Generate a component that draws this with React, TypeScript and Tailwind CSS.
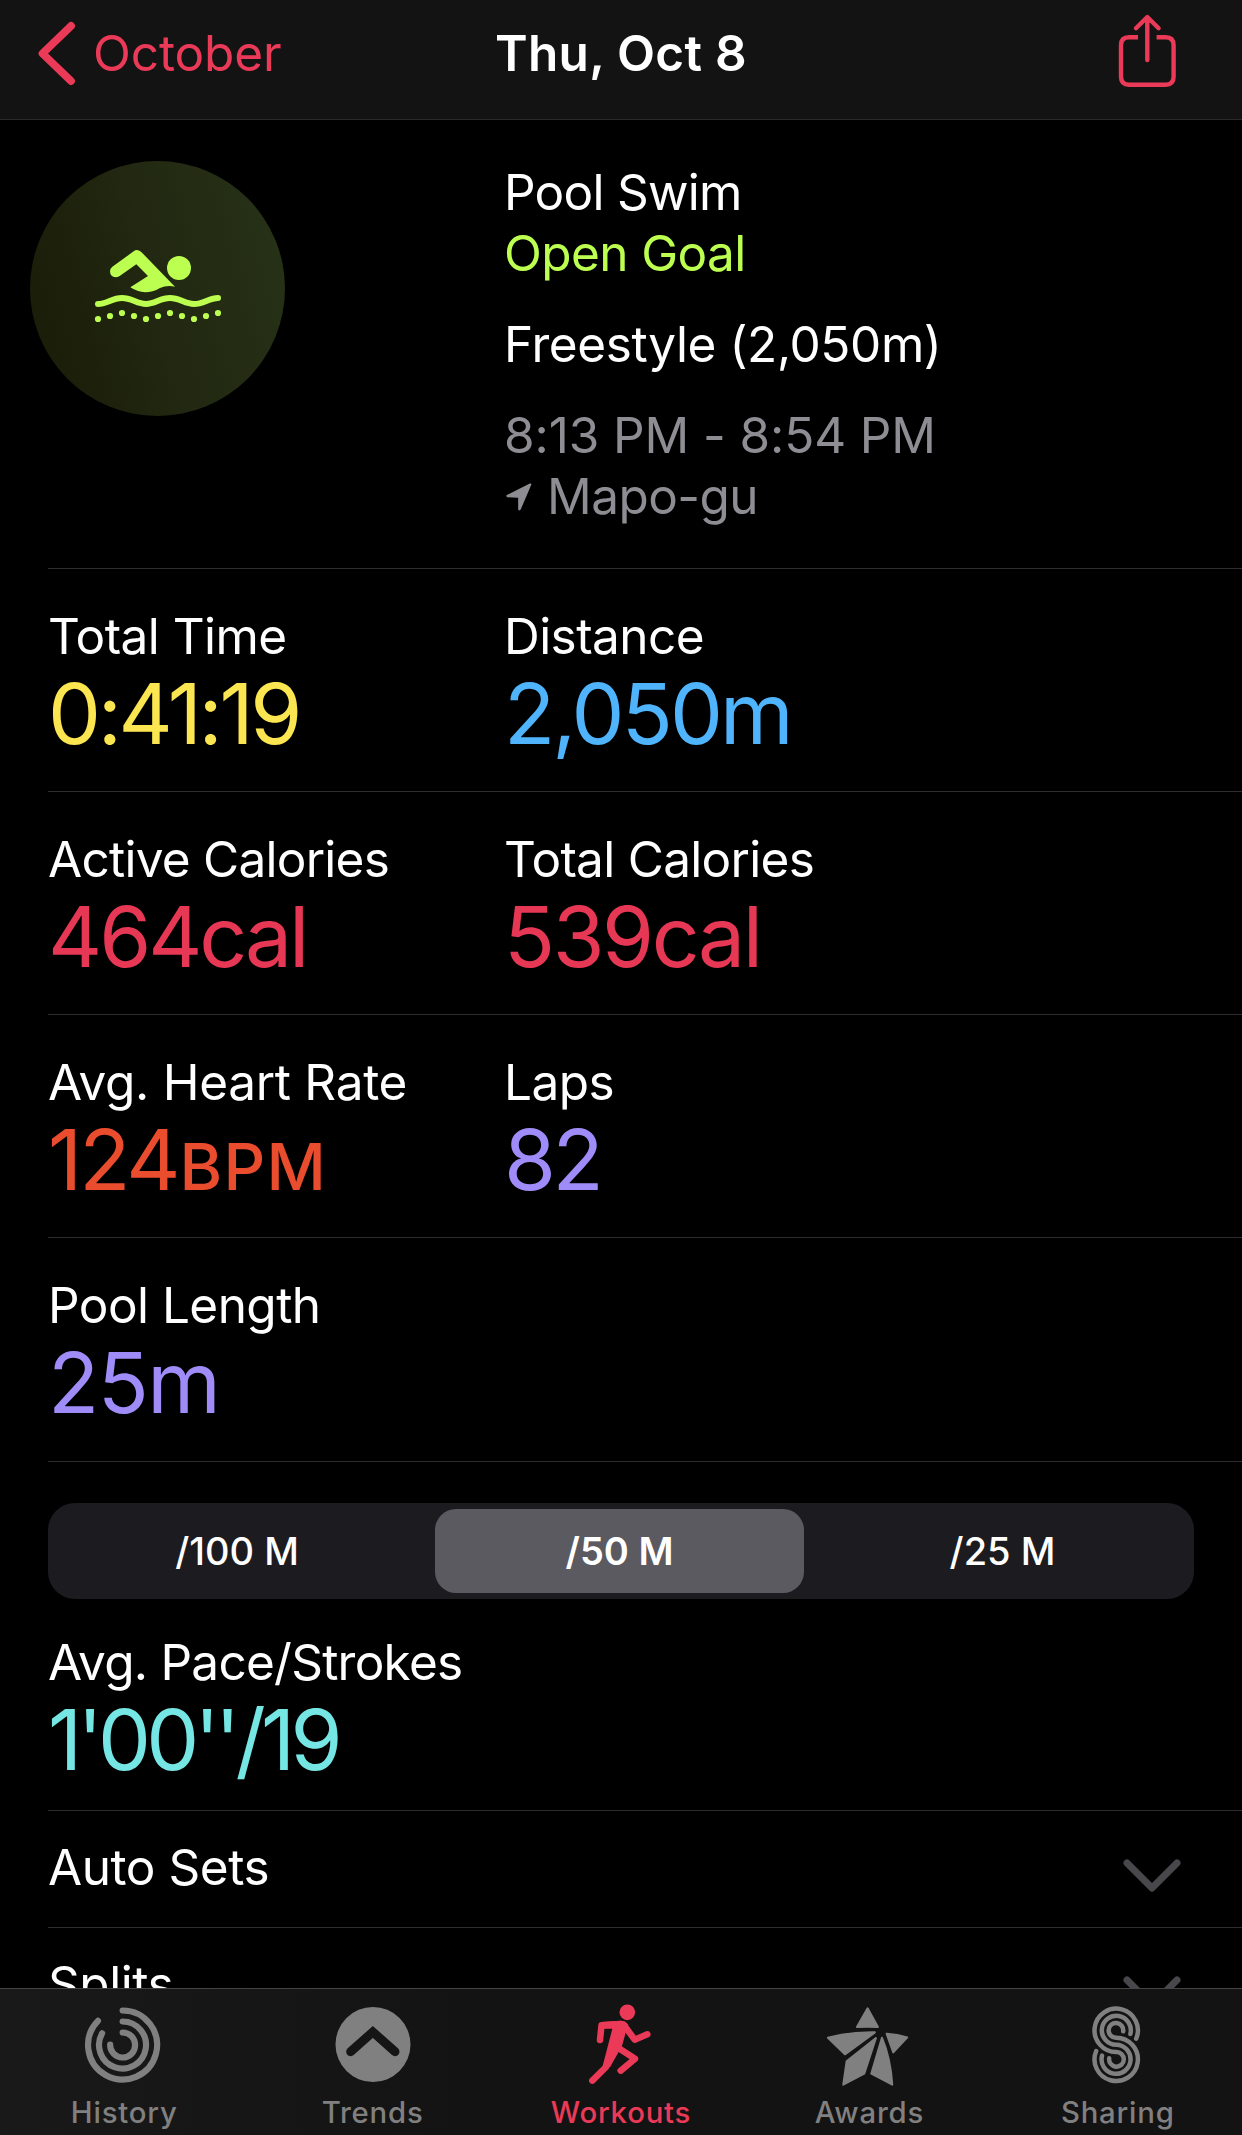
import React from "react";

type Stat = {
  label: string;
  labelClass?: string;
  value: string;
  valueClass: string;
  unit?: string;
};

const statRows: Stat[][] = [
  [
    { label: "Total Time", value: "0:41:19", valueClass: "text-[#fbe550] tracking-[-0.04em]" },
    { label: "Distance", value: "2,050m", valueClass: "text-[#4fb4fb] tracking-[-0.034em]" },
  ],
  [
    {
      label: "Active Calories",
      labelClass: "tracking-[-0.015em]",
      value: "464cal",
      valueClass: "text-[#e63755] tracking-[-0.037em]",
    },
    {
      label: "Total Calories",
      labelClass: "tracking-[-0.014em]",
      value: "539cal",
      valueClass: "text-[#e63755] tracking-[-0.029em]",
    },
  ],
  [
    {
      label: "Avg. Heart Rate",
      labelClass: "tracking-[-0.006em]",
      value: "124",
      valueClass: "text-[#ea4c2e] tracking-[-0.035em]",
      unit: "BPM",
    },
    { label: "Laps", value: "82", valueClass: "text-[#9f8cf8] tracking-[-0.04em]" },
  ],
  [{ label: "Pool Length", value: "25m", valueClass: "text-[#9f8cf8] tracking-[-0.018em]" }],
];

const waveDots = [507, 498, 489, 498, 507, 498, 489, 498, 507, 498, 489];

const BackIcon = () => (
  <svg className="h-[66px] w-[40px]" viewBox="37 21 40 66" fill="none" stroke="currentColor">
    <path d="M71 26 42.5 53.5 71 81" strokeWidth="7.8" strokeLinecap="round" strokeLinejoin="round" />
  </svg>
);

const ShareIcon = () => (
  <svg className="-mt-[5px] h-[76px] w-[60px]" viewBox="1117 13 60 76" fill="none" stroke="currentColor" strokeWidth="4.4">
    <path d="M1138 37.2h-9q-8 0-8 8v31.6q0 8 8 8h36.6q8 0 8-8V45.2q0-8-8-8h-9" />
    <path d="M1147.3 60V17.5M1136 28.2 1147.3 17 1158.6 28.2" strokeLinecap="round" strokeLinejoin="round" />
  </svg>
);

const SwimIcon = () => (
  <svg className="size-full" viewBox="30 33 765 765" fill="currentColor">
    <circle cx="477" cy="354" r="36" />
    <path d="M277 350 341 304Q351 296 363 305L465 410Q440 405 420 414 398 427 375 427 352 426 331 412L384 378 349 343 299 378Q292 382 287 382 270 380 270 363 270 355 277 350Z" />
    <path
      d="M234 462C260 462 276 444 306 444S350 462 378 462 420 444 450 444 494 462 522 462 568 444 594 444"
      fill="none"
      stroke="currentColor"
      strokeWidth="18"
      strokeLinecap="round"
    />
    {waveDots.map((y, i) => (
      <circle key={i} cx={234 + i * 36} cy={y} r="9.3" />
    ))}
  </svg>
);

const LocationIcon = () => (
  <svg className="h-[28px] w-[26px]" viewBox="48 1004 77 84" fill="currentColor">
    <path d="M50 1040 119 1005.5Q125 1004 123 1010L92 1083Q90 1087 86 1086 84 1085 84 1081V1048L52 1047Q46 1044 50 1040Z" />
  </svg>
);

const ChevronIcon = () => (
  <svg className="h-[36px] w-[60px]" viewBox="0 0 60 36" fill="none" stroke="currentColor">
    <path d="M5 5 30 30 55 5" strokeWidth="7" strokeLinecap="round" strokeLinejoin="round" />
  </svg>
);

const HistoryIcon = () => (
  <svg className="h-[90px] w-[100px]" viewBox="102.6 60 300 270" fill="none" stroke="currentColor" strokeWidth="18.5" strokeLinecap="round">
    <path d="M248.5 91.5A103.5 103.5 0 1 1 174.5 122.5" />
    <path d="M248.5 124.5A70.5 70.5 0 1 1 187 160" />
    <path d="M248.5 157.5A37.5 37.5 0 1 1 211 194" />
  </svg>
);

const TrendsIcon = () => (
  <svg className="h-[90px] w-[100px]" viewBox="848 60 300 270">
    <circle cx="998" cy="193.5" r="112.5" fill="currentColor" />
    <path d="M931 215 997.5 156 1064 215" fill="none" stroke="#151515" strokeWidth="27" strokeLinecap="round" strokeLinejoin="miter" />
  </svg>
);

const WorkoutsIcon = () => (
  <svg className="h-[90px] w-[100px]" viewBox="123 60 300 270" fill="currentColor">
    <circle cx="292" cy="97" r="23.5" />
    <path d="M215 126 272 122Q286 122 295 134L287 158 276 198 240 262 218 258 247 146 215 146Z" />
    <g fill="none" stroke="currentColor" strokeWidth="19.5" strokeLinecap="round" strokeLinejoin="round">
      <path d="M210 180 214.5 136 272 132" />
      <path d="M281 134 314 179 352 163" />
      <path d="M262 150 228 261 187 302" />
      <path d="M264 203 315 236 272 272" />
    </g>
  </svg>
);

const AwardsIcon = () => (
  <svg className="h-[90px] w-[100px]" viewBox="868.2 60 300 270" fill="currentColor" stroke="currentColor" strokeWidth="6" strokeLinejoin="round">
    <path d="M1014 85 1045 141Q1014 139 982 141Z" />
    <path d="M895 173Q960 156 1036 157L946 223Z" />
    <path d="M1039 174 1004 281 941 314 951 244Z" />
    <path d="M1057 173Q1083 235 1088 314L1025 281Z" />
    <path d="M1071 161Q1105 163 1133 172L1091 217Z" />
  </svg>
);

const SharingIcon = () => (
  <svg className="h-[90px] w-[100px]" viewBox="203.4 120 300 270" fill="none" stroke="currentColor" strokeWidth="13.5" strokeLinecap="round">
    <path d="M408 236A65 65 0 1 0 348 276A22 22 0 1 1 327 295" />
    <path d="M390.5 222A43.5 43.5 0 1 0 348 254.5A43.5 43.5 0 1 1 305.5 287" />
    <path d="M369 214A22 22 0 1 0 348 233A65 65 0 1 1 288 273" />
  </svg>
);

const tabs = [
  { name: "History", icon: HistoryIcon },
  { name: "Trends", icon: TrendsIcon },
  { name: "Workouts", icon: WorkoutsIcon, active: true },
  { name: "Awards", icon: AwardsIcon },
  { name: "Sharing", icon: SharingIcon },
];

const StatBlock = ({ label, labelClass = "tracking-[-0.011em]", value, valueClass, unit }: Stat) => (
  <div className="w-[456px]">
    <p className={`leading-[61px] ${labelClass}`}>{label}</p>
    <p className={`text-[84px] leading-[94px] ${valueClass}`}>
      {value}
      {unit && <span className="ml-[2px] text-[65px] leading-none font-medium tracking-[0.02em]">{unit}</span>}
    </p>
  </div>
);

const ExpandRow = ({ title }: { title: string }) => (
  <div className="flex h-[117px] shrink-0 items-start justify-between border-b border-[#2d2d30] pt-[26px] pr-[60px]">
    <p className="leading-[61px] tracking-[-0.009em]">{title}</p>
    <span className="mt-[21px] text-[#48474c]">
      <ChevronIcon />
    </span>
  </div>
);

const App = () => {
  return (
    <div className="flex h-[2135px] w-[1242px] flex-col overflow-hidden bg-black font-['Inter',sans-serif] text-[49.5px] text-white">
      <header className="grid h-[120px] shrink-0 grid-cols-3 items-center border-b border-[#2a2a2a] bg-[#131313] pb-[12px]">
        <div className="flex items-center gap-[16px] pl-[37px] text-[#eb3a58]">
          <BackIcon />
          <span className="tracking-[-0.002em]">October</span>
        </div>
        <h1 className="text-center font-semibold tracking-[0.006em]">Thu, Oct 8</h1>
        <div className="flex justify-end pr-[65px] text-[#eb3a58]">
          <ShareIcon />
        </div>
      </header>

      <main className="flex min-h-0 flex-1 flex-col overflow-hidden pl-[48px]">
        <section className="flex h-[449px] shrink-0 border-b border-[#2d2d30] pt-[41px]">
          <div className="-ml-[18px] size-[255px] rounded-full bg-linear-[75deg,#191b06,#222811_50%,#273318] text-[#bcff50]">
            <SwimIcon />
          </div>
          <div className="mt-px ml-[219px] leading-[61px]">
            <p className="tracking-[-0.015em]">Pool Swim</p>
            <p className="tracking-[-0.012em] text-[#bcff50]">Open Goal</p>
            <p className="mt-[30px] tracking-[-0.008em]">Freestyle (2,050m)</p>
            <div className="mt-[30px] text-[#8e8d93]">
              <p className="tracking-[-0.002em]">8:13 PM - 8:54 PM</p>
              <p className="flex items-center gap-[15px] pl-[2px] tracking-[-0.011em]">
                <LocationIcon />
                Mapo-gu
              </p>
            </div>
          </div>
        </section>

        {statRows.map((row, i) => (
          <section key={i} className="flex h-[223px] shrink-0 border-b border-[#2d2d30] pt-[37px] last-of-type:h-[224px]">
            {row.map((stat) => (
              <StatBlock key={stat.label} {...stat} />
            ))}
          </section>
        ))}

        <div className="mt-[41px] mr-[48px] flex h-[96px] shrink-0 items-center rounded-[27px] bg-[#1c1b20] p-[6px] text-[38px] font-medium">
          <button className="h-full w-[381px] pr-[15px]">/100 M</button>
          <button className="h-full w-[369px] rounded-[21px] bg-[#5b5a60] font-semibold">/50 M</button>
          <button className="h-full flex-1 pl-[13px]">/25 M</button>
        </div>

        <div className="h-[212px] shrink-0 border-b border-[#2d2d30] pt-[33px]">
          <StatBlock
            label="Avg. Pace/Strokes"
            labelClass="tracking-[-0.015em]"
            value="1'00''/19"
            valueClass="text-[#75e6e3] tracking-[-0.056em]"
          />
        </div>

        <ExpandRow title="Auto Sets" />
        <ExpandRow title="Splits" />
      </main>

      <nav className="grid h-[147px] shrink-0 grid-cols-5 border-t border-[#454545] bg-linear-[to_right,#191919,#131313_40%] pt-[11px]">
        {tabs.map(({ name, icon: Icon, active }) => (
          <div key={name} className={`flex flex-col items-center ${active ? "text-[#eb3a58]" : "text-[#808080]"}`}>
            <Icon />
            <span className="mt-[3px] text-[29.3px] leading-[40px] font-medium tracking-[0.028em]">{name}</span>
          </div>
        ))}
      </nav>
    </div>
  );
};

export default App;
